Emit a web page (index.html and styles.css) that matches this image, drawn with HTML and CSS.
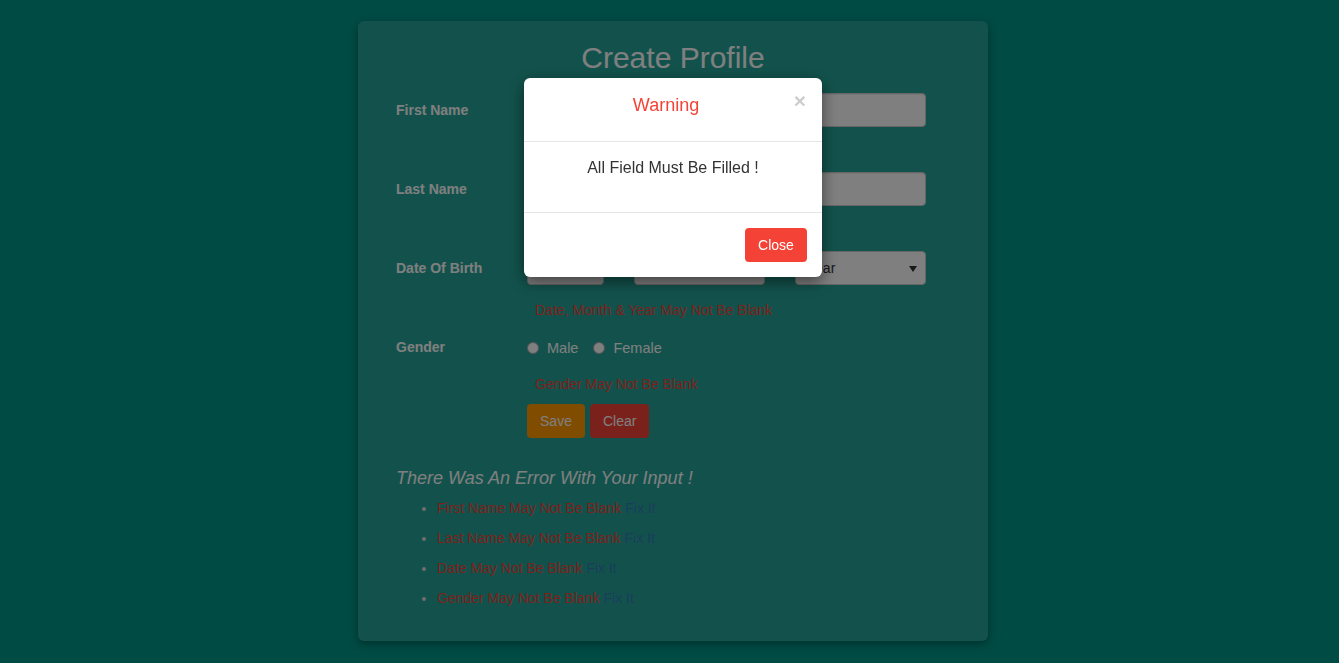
FILE: index.html
```html
<!DOCTYPE html>
<html lang="en">
<head>
<meta charset="utf-8">
<title>Create Profile</title>
<link rel="stylesheet" href="styles.css">
</head>
<body>
<div class="page">
  <div class="card">
    <h1 class="title">Create Profile</h1>
    <form class="form">
      <div class="field">
        <label class="label">First Name</label>
        <div class="control">
          <input class="input" type="text">
          <div class="error"></div>
        </div>
      </div>
      <div class="field">
        <label class="label">Last Name</label>
        <div class="control">
          <input class="input" type="text">
          <div class="error"></div>
        </div>
      </div>
      <div class="field">
        <label class="label">Date Of Birth</label>
        <div class="control">
          <div class="selects">
            <div class="select sel-day"><span>Date</span></div>
            <div class="select sel-month"><span>Month</span></div>
            <div class="select sel-year"><span>Year</span></div>
          </div>
          <div class="error">Date, Month &amp; Year May Not Be Blank</div>
        </div>
      </div>
      <div class="field field-gender">
        <label class="label">Gender</label>
        <div class="control">
          <div class="radios">
            <span class="radio"><span class="dot"></span>Male</span>
            <span class="radio"><span class="dot"></span>Female</span>
          </div>
          <div class="error error-gender">Gender May Not Be Blank</div>
          <div class="buttons">
            <button type="button" class="btn btn-save">Save</button>
            <button type="button" class="btn btn-clear">Clear</button>
          </div>
        </div>
      </div>
    </form>
    <h3 class="summary-title">There Was An Error With Your Input !</h3>
    <ul class="summary">
      <li><span class="err">First Name May Not Be Blank</span> <a class="fix">Fix It</a></li>
      <li><span class="err">Last Name May Not Be Blank</span> <a class="fix">Fix It</a></li>
      <li><span class="err">Date May Not Be Blank</span> <a class="fix">Fix It</a></li>
      <li><span class="err">Gender May Not Be Blank</span> <a class="fix">Fix It</a></li>
    </ul>
  </div>
</div>

<div class="backdrop"></div>
<div class="modal-layer">
  <div class="modal">
    <div class="modal-header">
      <h4 class="modal-title">Warning</h4>
      <button type="button" class="close">&times;</button>
    </div>
    <div class="modal-body">All Field Must Be Filled !</div>
    <div class="modal-footer">
      <button type="button" class="btn btn-close">Close</button>
    </div>
  </div>
</div>
</body>
</html>
```

FILE: styles.css
```css
* { box-sizing: border-box; }
html, body {
  margin: 0;
  min-height: 100%;
}
body {
  background: #009688;
  font-family: "Liberation Sans", Arial, sans-serif;
  font-size: 14px;
  color: #333;
  padding-left: 7px;
  height: 663px;
  overflow: hidden;
}
.page {
  padding-top: 21px;
}
.card {
  width: 630px;
  margin: 0 auto;
  background: rgba(255,255,255,0.15);
  border-radius: 6px;
  box-shadow: 0 3px 8px rgba(0,0,0,0.35);
  padding: 19px 62px 23px 38px;
  color: #fff;
}
.title {
  margin: 0;
  font-size: 30px;
  font-weight: normal;
  line-height: 36px;
  text-align: center;
  padding-left: 24px;
}
.form {
  margin-top: 17px;
}
.field {
  display: flex;
  margin-bottom: 10px;
}
.label {
  width: 131px;
  flex-shrink: 0;
  font-weight: bold;
  line-height: 34px;
  color: #fff;
}
.control {
  flex: 1;
}
.input {
  display: block;
  width: 100%;
  height: 34px;
  border: 1px solid #ccc;
  border-radius: 4px;
  background: #fff;
  box-shadow: inset 0 1px 1px rgba(0,0,0,.075);
}
.error {
  margin-top: 15px;
  height: 20px;
  line-height: 20px;
  padding-left: 8px;
  color: #f44336;
}
.selects {
  display: flex;
  gap: 30px;
}
.select {
  position: relative;
  height: 34px;
  border: 1px solid #ccc;
  border-radius: 4px;
  background: #fff;
  color: #333;
  padding-left: 11px;
  line-height: 32px;
  font-size: 14px;
}
.select::after {
  content: "";
  position: absolute;
  right: 8px;
  top: 14px;
  border-left: 4px solid transparent;
  border-right: 4px solid transparent;
  border-top: 6px solid #333;
}
.sel-day { width: 77px; }
.sel-month { width: 131px; }
.sel-year { width: 131px; }
.radios {
  height: 34px;
  display: flex;
  align-items: center;
  gap: 15px;
  font-size: 14.5px;
  color: #fff;
  padding-top: 1px;
}
.radio {
  display: flex;
  align-items: center;
}
.dot {
  width: 12px;
  height: 12px;
  border-radius: 50%;
  background: #fff;
  border: 1px solid #aaa;
  margin-right: 8px;
}
.error-gender {
  margin-top: 10px;
}
.buttons {
  margin-top: 10px;
  display: flex;
  gap: 5px;
}
.btn {
  font-family: "Liberation Sans", Arial, sans-serif;
  font-size: 14px;
  height: 34px;
  padding: 0 12px;
  border: 1px solid transparent;
  border-radius: 4px;
  color: #fff;
  cursor: pointer;
}
.btn-save { background: #ff9800; width: 58px; }
.btn-clear { background: #f44336; width: 59px; }
.summary-title {
  margin: 28px 0 0;
  font-size: 18px;
  font-style: italic;
  font-weight: normal;
  line-height: 24px;
  color: #fff;
}
.summary {
  margin: 8px 0 0;
  padding-left: 41px;
  color: #ddd;
}
.summary li {
  line-height: 20px;
  margin-bottom: 10px;
}
.err { color: #f44336; }
.fix { color: #337ab7; }

.backdrop {
  position: fixed;
  inset: 0;
  background: rgba(0,0,0,0.5);
}
.modal-layer {
  position: fixed;
  inset: 0;
  padding-left: 7px;
  padding-top: 78px;
  display: flex;
  justify-content: center;
  align-items: flex-start;
}
.modal {
  width: 298px;
  background: #fff;
  border-radius: 6px;
  box-shadow: 0 5px 15px rgba(0,0,0,.5);
}
.modal-header {
  display: flex;
  align-items: flex-start;
  padding: 14px 15px 23px;
  border-bottom: 1px solid #e5e5e5;
}
.modal-title {
  flex: 1;
  margin: 0;
  text-align: center;
  font-size: 18px;
  font-weight: normal;
  line-height: 26px;
  color: #f44336;
}
.close {
  margin-top: -2px;
  padding: 0;
  border: 0;
  background: transparent;
  font-family: "Liberation Sans", Arial, sans-serif;
  font-size: 21px;
  font-weight: bold;
  line-height: 1;
  color: #000;
  opacity: .2;
  width: 14px;
}
.modal-body {
  padding: 16px 15px 34px;
  text-align: center;
  font-size: 16px;
  line-height: 20px;
  color: #333;
}
.modal-footer {
  padding: 15px;
  border-top: 1px solid #e5e5e5;
  display: flex;
  justify-content: flex-end;
}
.btn-close {
  background: #f44336;
  width: 62px;
}
```
